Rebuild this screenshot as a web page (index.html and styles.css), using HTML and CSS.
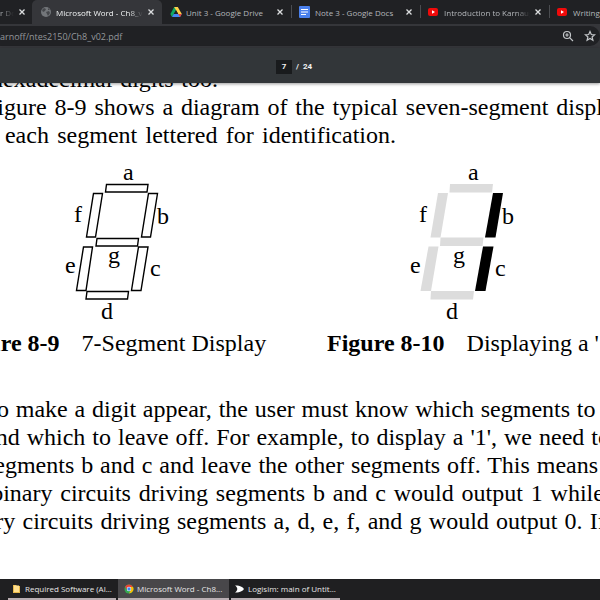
FILE: index.html
```
<!DOCTYPE html>
<html lang="en">
<head>
<meta charset="utf-8">
<title>Microsoft Word - Ch8_v02</title>
<link rel="stylesheet" href="styles.css">
</head>
<body>
<nav class="tabs" aria-label="Tabs">
  <div class="tab tab-first"><a class="tab-title fade" href="#">r Do</a><button class="close" aria-label="Close"><svg viewBox="0 0 8 8"><path d="M1.500 1.500l5 5M6.500 1.500l-5 5"/></svg></button></div>
  <div class="tab active">
    <svg class="icon" viewBox="0 0 12 12"><circle cx="6" cy="6" r="5" fill="#73767a"/><path d="M2 4l2-2 2 1-1 2-2 1zM6 6l3-1 1 2-2 3-1-2zM8 2l2 2-2 0z" fill="#45474b"/></svg>
    <a class="tab-title fade" href="#">Microsoft Word - Ch8_v02</a><button class="close" aria-label="Close"><svg viewBox="0 0 8 8"><path d="M1.500 1.500l5 5M6.500 1.500l-5 5"/></svg></button></div>
  <div class="tab">
    <svg class="icon" viewBox="0 0 12 12"><path d="M4.200 1h3.600l-4.200 7.400L2 11 .4 8z" fill="#11a861"/><path d="M4.200 1h3.600l4 7H8.200z" fill="#ffcf48"/><path d="M3.700 8h8.100L10 11H2z" fill="#4688f4"/><path d="M8.200 8h3.600L10 11z" fill="#ea4335"/><path d="M6 4.200L8.200 8H3.800z" fill="#202124"/></svg>
    <a class="tab-title" href="#">Unit 3 - Google Drive</a><button class="close" aria-label="Close"><svg viewBox="0 0 8 8"><path d="M1.500 1.500l5 5M6.500 1.500l-5 5"/></svg></button></div>
  <div class="tab divided">
    <svg class="icon" viewBox="0 0 12 12"><rect x="0" y="0" width="11" height="12" rx="1" fill="#4a80ec"/><path d="M2 3.500h7M2 6h7M2 8.500h5" stroke="#fff" stroke-width="1.200"/></svg>
    <a class="tab-title" href="#">Note 3 - Google Docs</a><button class="close" aria-label="Close"><svg viewBox="0 0 8 8"><path d="M1.500 1.500l5 5M6.500 1.500l-5 5"/></svg></button></div>
  <div class="tab divided">
    <svg class="icon" viewBox="0 0 12 12"><rect x="0" y="2" width="10" height="8" rx="2" fill="#f00a0a"/><path d="M4 4.200v3.600L7 6z" fill="#fff"/></svg>
    <a class="tab-title fade" href="#">Introduction to Karnaugh Maps</a><button class="close" aria-label="Close"><svg viewBox="0 0 8 8"><path d="M1.500 1.500l5 5M6.500 1.500l-5 5"/></svg></button></div>
  <div class="tab divided">
    <svg class="icon" viewBox="0 0 12 12"><rect x="0" y="2" width="10" height="8" rx="2" fill="#f00a0a"/><path d="M4 4.200v3.600L7 6z" fill="#fff"/></svg>
    <a class="tab-title" href="#">Writing</a></div>
</nav>
<div class="address">
  <div class="omnibox">
    <input class="url" type="text" aria-label="Address" value="arnoff/ntes2150/Ch8_v02.pdf">
    <button class="tool" aria-label="Zoom"><svg viewBox="0 0 12 12"><circle cx="5" cy="5" r="3.500"/><path d="M7.600 7.600L11 11M3.300 5h3.400M5 3.300v3.400"/></svg></button>
    <button class="tool" aria-label="Bookmark"><svg viewBox="0 0 12 12"><path d="M6 1.500l1.300 3 3.300.3-2.500 2.200.8 3.300L6 8.500l-2.900 1.800.8-3.300L1.400 4.800l3.300-.3z"/></svg></button>
  </div>
</div>
<header class="viewer-bar"><input class="page-number" type="text" aria-label="Page" value="7"><span>/</span><span>24</span></header>
<main class="viewer">
  <article class="sheet">
    <p class="tail">the hexadecimal digits too.</p>
    <p class="indent">Figure 8-9 shows a diagram of the typical seven-segment displays,</p>
    <p class="last">with each segment lettered for identification.</p>
    <div class="figures">
      <figure>
        <svg class="digit left" viewBox="60 160 120 164">
          <g fill="#fff" stroke="#000" stroke-width="1.400">
            <path d="M106.500 184.500h41.500l-1 7.500h-41.500z"/><path d="M93.500 193.500h9l-7 43.500h-9z"/><path d="M148.500 193.500h9l-7 43.500h-9z"/><path d="M97 238.500h41.500l-1 7.500H96z"/><path d="M83.500 247h9l-6.500 43.500h-9.500z"/><path d="M138.500 247h9.500l-7 43.500h-9.500z"/><path d="M87 291.500h41.500l-1 7.500H86z"/>
          </g>
          <text x="123" y="180">a</text><text x="157" y="224">b</text><text x="150" y="276">c</text><text x="101" y="319">d</text><text x="65" y="273">e</text><text x="74" y="222">f</text><text x="108" y="263">g</text>
        </svg>
        <figcaption><b>Figure 8-9</b>7-Segment Display</figcaption>
      </figure>
      <figure>
        <svg class="digit right" viewBox="405 160 120 164">
          <g fill="#dcdcdc"><path d="M450 184h43l-1 8.500h-42.500z"/><path d="M438 193h10l-7.500 44.500h-10z"/><path d="M440.500 237.500h43l-1 8.500H440z"/><path d="M428.500 246.500h10l-7.500 44.500h-10.500z"/><path d="M431 291h43l-1 8.500h-42.500z"/></g>
          <path d="M493 193h10l-7.500 44.500h-10.500z"/><path d="M483 246.500h10.500l-8 44.500H475z"/>
          <text x="468" y="180">a</text><text x="502" y="224">b</text><text x="495" y="276">c</text><text x="446" y="319">d</text><text x="410" y="273">e</text><text x="419" y="222">f</text><text x="453" y="263">g</text>
        </svg>
        <figcaption><b>Figure 8-10</b>Displaying a '1'</figcaption>
      </figure>
    </div>
    <p class="indent">To make a digit appear, the user must know which segments to turn<br>on and which to leave off. For example, to display a '1', we need to do<br>on segments b and c and leave the other segments off. This means that<br>the binary circuits driving segments b and c would output 1 while the<br>binary circuits driving segments a, d, e, f, and g would output 0. If we</p>
  </article>
</main>
<footer class="taskbar">
  <button class="task"><svg viewBox="0 0 10 10"><path d="M1 1h3l1 1h3v7H1z" fill="#e8b84a"/><path d="M2 1.500h5V8H2z" fill="#ffdf8e"/></svg><span>Required Software (Al...</span></button>
  <button class="task current"><svg viewBox="0 0 10 10"><circle cx="5" cy="5" r="4.500" fill="#34a853"/><path d="M1.100 2.700A4.500 4.500 0 0 1 9 3H5L3.200 6z" fill="#ea4335"/><path d="M9 3A4.500 4.500 0 0 1 5 9.500L7 5.500 6 3z" fill="#fbbc05"/><circle cx="5" cy="5" r="2.200" fill="#fff"/><circle cx="5" cy="5" r="1.700" fill="#4285f4"/></svg><span>Microsoft Word - Ch8...</span></button>
  <button class="task"><svg viewBox="0 0 10 10"><path d="M0 1.500c6 0 8 2 9 3.500-1 1.500-3 3.500-9 3.500C3 6.500 3 3.500 0 1.500z" fill="#fff"/></svg><span>Logisim: main of Untit...</span></button>
</footer>
</body>
</html>
```
FILE: styles.css
```
* { box-sizing: border-box; }
body {
  margin: 0;
  height: 100vh;
  display: flex;
  flex-direction: column;
  overflow: hidden;
  background: #fff;
  font-family: "Open Sans", "Noto Sans", sans-serif;
}
button, input {
  margin: 0;
  padding: 0;
  border: 0;
  background: none;
  color: inherit;
  font: inherit;
}
a { color: inherit; text-decoration: none; }

.tabs {
  flex: none;
  display: flex;
  height: 24px;
  overflow: hidden;
  background: #202124;
  color: #b4b7bb;
  font-size: 8px;
}
.tab {
  flex: 0 0 129px;
  min-width: 0;
  display: flex;
  align-items: center;
  padding: 0 7px 0 8px;
}
.tab-first { flex-basis: 32px; padding: 0 6px 0 0; }
.tab.active {
  flex-basis: 130px;
  background: #35363a;
  border-radius: 5px 5px 0 0;
  color: #f1f3f4;
}
.tab.divided {
  background: linear-gradient(#4a4c50, #4a4c50) 0 5px / 1px 13px no-repeat;
}
.icon { flex: none; width: 12px; height: 12px; margin-right: 4px; }
.tab-title {
  flex: 1;
  min-width: 0;
  overflow: hidden;
  white-space: nowrap;
}
.fade { mask-image: linear-gradient(to left, transparent, #000 14px); }
.close { flex: none; width: 8px; height: 8px; margin-left: 4px; }
.close svg { display: block; fill: none; stroke: #dcdee0; stroke-width: 1.300; }

.address {
  flex: none;
  height: 24px;
  padding: 2px 0;
  background: #35363a;
}
.omnibox {
  display: flex;
  align-items: center;
  height: 20px;
  padding-right: 4px;
  background: #202124;
  border-radius: 0 10px 10px 0;
}
.url { flex: 1; min-width: 0; color: #94979b; font-size: 9px; }
.tool { flex: none; width: 12px; height: 12px; margin-left: 10px; }
.tool svg { display: block; fill: none; stroke: #c4c7ca; stroke-width: 1.200; }

.viewer-bar {
  flex: none;
  position: relative;
  z-index: 1;
  display: flex;
  align-items: center;
  justify-content: center;
  gap: 4px;
  height: 35px;
  padding: 2px 12px 0 0;
  background: #323639;
  box-shadow: 0 1px 3px #0006;
  color: #f1f1f1;
  font: bold 8px Roboto, sans-serif;
}
.page-number {
  width: 16px;
  height: 14px;
  background: #191b1d;
  text-align: center;
}

.viewer { flex: 1; min-height: 0; overflow: hidden; }
.sheet {
  margin: -18px -41px 0 -46px;
  color: #000;
  font: 24px/28px "Liberation Serif", serif;
}
.sheet p {
  margin: 0;
  text-align: justify;
  text-align-last: justify;
  white-space: nowrap;
}
.sheet .tail { max-width: 264px; }
.sheet .last { max-width: 442px; }
.indent { text-indent: 30px; }
.figures {
  display: grid;
  grid-template-columns: 373px 1fr;
  padding: 11px 0 38px;
}
figure { margin: 0; }
.digit { display: block; width: 120px; height: 164px; }
.left { margin-left: 106px; }
.right { margin-left: 78px; }
figcaption { padding-top: 5px; white-space: nowrap; }
figcaption b { margin-right: 22px; }

.taskbar {
  flex: none;
  display: flex;
  gap: 2px;
  height: 21px;
  padding-left: 8px;
  background: #1f1f21;
  color: #e6e6e6;
  font-size: 8px;
}
.task {
  flex: 0 0 108px;
  display: flex;
  align-items: center;
  gap: 3px;
  padding: 0 4px;
  border-bottom: 2px solid #b9aeb2;
  white-space: nowrap;
}
.task.current { flex-basis: 111px; padding-left: 6px; background: #48474a; }
.task svg { flex: none; width: 10px; height: 10px; }
```
